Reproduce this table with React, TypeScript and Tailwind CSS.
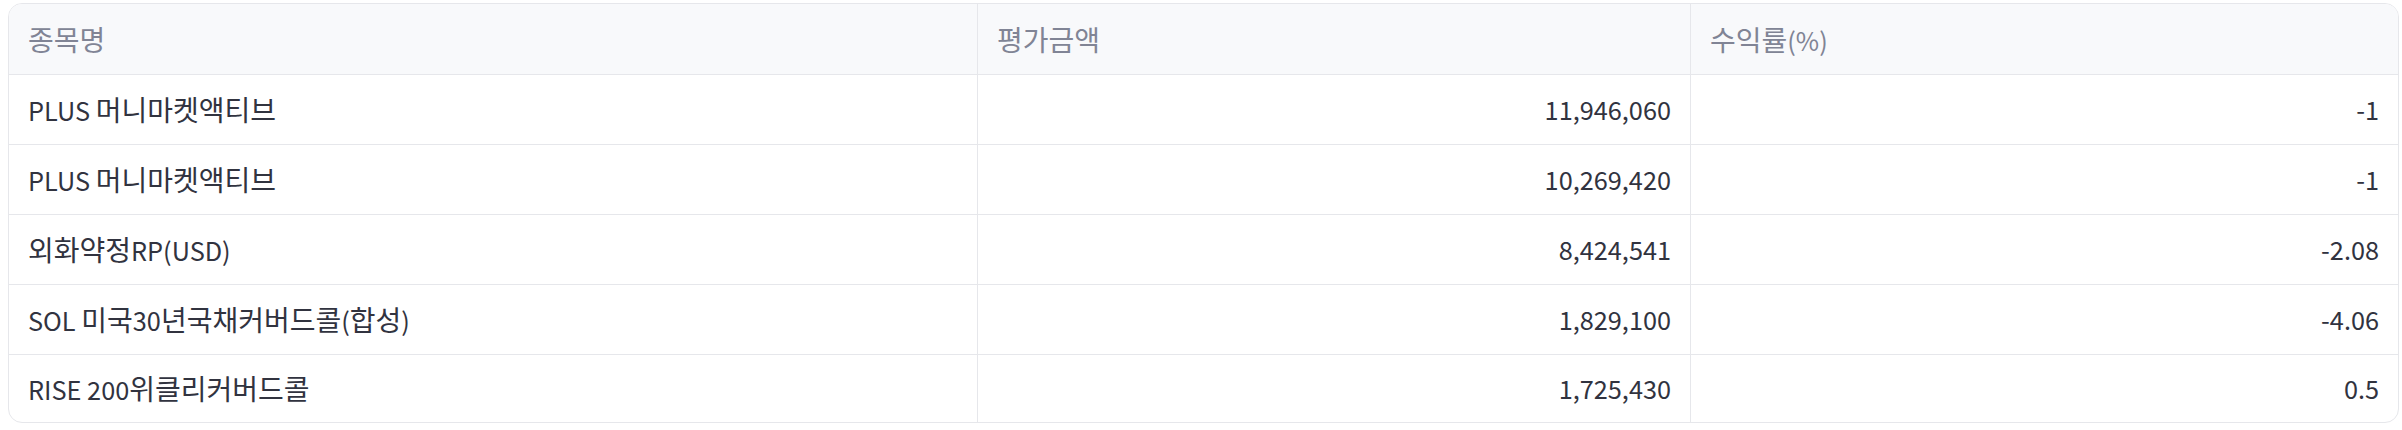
import React from "react";

const rows = [
  { name: "PLUS 머니마켓액티브", value: "11,946,060", rate: "-1" },
  { name: "PLUS 머니마켓액티브", value: "10,269,420", rate: "-1" },
  { name: "외화약정RP(USD)", value: "8,424,541", rate: "-2.08" },
  { name: "SOL 미국30년국채커버드콜(합성)", value: "1,829,100", rate: "-4.06" },
  { name: "RISE 200위클리커버드콜", value: "1,725,430", rate: "0.5" },
];

function Txt({ s }: { s: string }) {
  const parts = s.split(/([\uAC00-\uD7A3]+)/).filter((p) => p.length > 0);
  return (
    <span className="whitespace-pre">
      {parts.map((p, i) =>
        /[\uAC00-\uD7A3]/.test(p) ? (
          <span key={i} className="text-[28px]">
            {p}
          </span>
        ) : (
          <span key={i} className="text-[25.3px]">
            {p}
          </span>
        )
      )}
    </span>
  );
}

export default function App() {
  return (
    <div
      className="w-[2402px] h-[430px] bg-white pl-[8px] pt-[3px]"
      style={{ fontFamily: '"Noto Sans CJK KR", "Noto Sans", sans-serif' }}
    >
      <div className="w-[2391px] border-[1.5px] border-[#e6e7eb] rounded-[14px] overflow-hidden leading-none">
        <div className="grid grid-cols-[968px_713px_1fr] h-[71px] bg-[#f8f9fb] text-[#808495] border-b-[1.5px] border-[#e6e7eb]">
          <div className="flex items-center px-[19px]">
            <Txt s="종목명" />
          </div>
          <div className="flex items-center px-[19px] border-l-[1.5px] border-[#e6e7eb]">
            <Txt s="평가금액" />
          </div>
          <div className="flex items-center px-[19px] border-l-[1.5px] border-[#e6e7eb]">
            <Txt s="수익률(%)" />
          </div>
        </div>
        {rows.map((r, i) => (
          <div
            key={i}
            className={`grid grid-cols-[968px_713px_1fr] text-[#31333f] ${
              i < rows.length - 1 ? "h-[70px] border-b-[1.5px] border-[#e6e7eb]" : "h-[67px]"
            }`}
          >
            <div className="flex items-center px-[19px]">
              <Txt s={r.name} />
            </div>
            <div className="flex items-center justify-end px-[19px] border-l-[1.5px] border-[#e6e7eb]">
              <Txt s={r.value} />
            </div>
            <div className="flex items-center justify-end px-[19px] border-l-[1.5px] border-[#e6e7eb]">
              <Txt s={r.rate} />
            </div>
          </div>
        ))}
      </div>
    </div>
  );
}
